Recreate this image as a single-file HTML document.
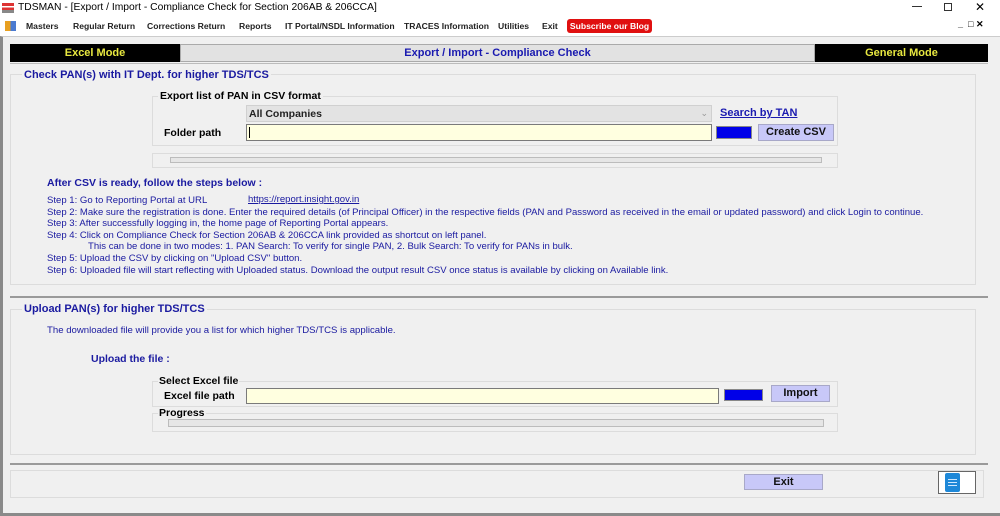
<!DOCTYPE html>
<html><head><meta charset="utf-8"><style>
*{margin:0;padding:0;box-sizing:border-box}
body{width:1000px;height:516px;background:#fff;font-family:"Liberation Sans",Arial,sans-serif;position:relative;overflow:hidden;color:#000}
.a{position:absolute;white-space:nowrap}
.b{font-weight:bold}
.blue{color:#1a1aa0}
.box{position:absolute;border:1px solid #dcdcdc}
.m{position:absolute;top:21px;font-size:8.6px;font-weight:bold;color:#222;white-space:nowrap}
.btn{position:absolute;background:#c8c8f8;border:1px solid #a8a8c8;font-weight:bold;font-size:11px;text-align:center;color:#111}
.bb{position:absolute;background:#0000e8;border:1px solid #888}
.inp{position:absolute;background:#ffffe0;border:1px solid #7a7a7a}
.bar{position:absolute;background:#e6e6e6;border:1px solid #bcbcbc}
.step{font-size:9.55px;color:#1a1aa0}
</style></head><body>
<!-- title bar -->
<div class="a" style="left:2px;top:3px;width:12px;height:10px;background:linear-gradient(#d33 0 30%,#fff 30% 45%,#d33 45% 70%,#888 70%)"></div>
<div class="a" style="left:18px;top:2px;font-size:10.3px">TDSMAN - [Export / Import - Compliance Check for Section 206AB &amp; 206CCA]</div>
<div class="a" style="left:912px;top:6px;width:10px;height:1px;background:#333"></div>
<div class="a" style="left:944px;top:3px;width:8px;height:8px;border:1px solid #333"></div>
<div class="a" style="left:975px;top:0px;font-size:12px">&#10005;</div>
<!-- menu -->
<div class="a" style="left:5px;top:21px;width:11px;height:10px;background:linear-gradient(90deg,#e8a020 50%,#4a7ad0 50%)"></div>
<div class="m" style="left:26px">Masters</div>
<div class="m" style="left:73px">Regular Return</div>
<div class="m" style="left:147px">Corrections Return</div>
<div class="m" style="left:239px">Reports</div>
<div class="m" style="left:285px">IT Portal/NSDL Information</div>
<div class="m" style="left:404px">TRACES Information</div>
<div class="m" style="left:498px">Utilities</div>
<div class="m" style="left:542px">Exit</div>
<div class="a" style="left:567px;top:19px;width:85px;height:14px;background:#e01010;border-radius:3px;color:#fff;font-size:8.6px;font-weight:bold;text-align:center;line-height:14px">Subscribe our Blog</div>
<div class="a b" style="left:958px;top:19px;font-size:9px">_ &nbsp;&#9633; &#10005;</div>
<!-- content -->
<div class="a" style="left:0;top:36px;width:1000px;height:480px;background:#f0f0f0;border-left:3px solid #8a8a8a;border-top:1px solid #ccc"></div>
<div class="a" style="left:0;top:513px;width:1000px;height:3px;background:#8a8a8a"></div>
<div class="a" style="left:10px;top:44px;width:170px;height:18px;background:#000;color:#e8e840;font-weight:bold;font-size:11px;text-align:center;line-height:18px">Excel Mode</div>
<div class="a" style="left:180px;top:44px;width:635px;height:18px;background:#e2e2e2;border:1px solid #aaa;color:#1a1ab0;font-weight:bold;font-size:11px;text-align:center;line-height:16px">Export / Import - Compliance Check</div>
<div class="a" style="left:815px;top:44px;width:173px;height:18px;background:#000;color:#e8e840;font-weight:bold;font-size:11px;text-align:center;line-height:18px">General Mode</div>
<div class="a" style="left:10px;top:63px;width:978px;height:1px;background:#bbb"></div>
<!-- section 1 -->
<div class="box" style="left:10px;top:74px;width:966px;height:211px"></div>
<div class="a b blue" style="left:22px;top:69px;font-size:11px;background:#f0f0f0;padding:0 2px">Check PAN(s) with IT Dept. for higher TDS/TCS</div>
<div class="box" style="left:152px;top:96px;width:686px;height:50px"></div>
<div class="a b" style="left:158px;top:90px;font-size:10.5px;background:#f0f0f0;padding:0 2px">Export list of PAN in CSV format</div>
<div class="a" style="left:246px;top:105px;width:466px;height:17px;background:#e3e3e3;border:1px solid #d0d0d0;font-size:10.5px;font-weight:bold;padding:2px 2px;color:#222">All Companies<span style="position:absolute;right:3px;top:2px;color:#999;font-weight:normal;font-size:9px">&#8964;</span></div>
<div class="a b" style="left:720px;top:107px;font-size:11px;color:#1a1ab0;text-decoration:underline">Search by TAN</div>
<div class="a b" style="left:164px;top:127px;font-size:10.5px">Folder path</div>
<div class="inp" style="left:246px;top:124px;width:466px;height:17px"><div style="position:absolute;left:2px;top:2px;width:1px;height:11px;background:#000"></div></div>
<div class="bb" style="left:716px;top:126px;width:36px;height:13px"></div>
<div class="btn" style="left:758px;top:124px;width:76px;height:17px;line-height:15px">Create CSV</div>
<div class="box" style="left:152px;top:153px;width:686px;height:15px"></div>
<div class="bar" style="left:170px;top:157px;width:652px;height:6px"></div>
<div class="a b blue" style="left:47px;top:177px;font-size:10.5px">After CSV is ready, follow the steps below :</div>
<div class="a step" style="left:47px;top:195px">Step 1: Go to Reporting Portal at URL</div>
<div class="a step" style="left:248px;top:194px;text-decoration:underline">https://report.insight.gov.in</div>
<div class="a step" style="left:47px;top:207px">Step 2: Make sure the registration is done. Enter the required details (of Principal Officer) in the respective fields (PAN and Password as received in the email or updated password) and click Login to continue.</div>
<div class="a step" style="left:47px;top:218px">Step 3: After successfully logging in, the home page of Reporting Portal appears.</div>
<div class="a step" style="left:47px;top:230px">Step 4: Click on Compliance Check for Section 206AB &amp; 206CCA link provided as shortcut on left panel.</div>
<div class="a step" style="left:88px;top:241px">This can be done in two modes: 1. PAN Search: To verify for single PAN, 2. Bulk Search: To verify for PANs in bulk.</div>
<div class="a step" style="left:47px;top:253px">Step 5: Upload the CSV by clicking on "Upload CSV" button.</div>
<div class="a step" style="left:47px;top:265px">Step 6: Uploaded file will start reflecting with Uploaded status. Download the output result CSV once status is available by clicking on Available link.</div>
<div class="a" style="left:10px;top:296px;width:978px;height:2px;background:#9a9a9a"></div>
<!-- section 2 -->
<div class="box" style="left:10px;top:309px;width:966px;height:146px"></div>
<div class="a b blue" style="left:22px;top:303px;font-size:11px;background:#f0f0f0;padding:0 2px">Upload PAN(s) for higher TDS/TCS</div>
<div class="a blue" style="left:47px;top:325px;font-size:9.6px">The downloaded file will provide you a list for which higher TDS/TCS is applicable.</div>
<div class="a b blue" style="left:91px;top:353px;font-size:10.5px">Upload the file :</div>
<div class="box" style="left:152px;top:381px;width:686px;height:26px"></div>
<div class="a b" style="left:158px;top:375px;font-size:10.5px;background:#f0f0f0;padding:0 1px">Select Excel file</div>
<div class="a b" style="left:164px;top:390px;font-size:10.5px">Excel file path</div>
<div class="inp" style="left:246px;top:388px;width:473px;height:16px"></div>
<div class="bb" style="left:724px;top:389px;width:39px;height:12px"></div>
<div class="btn" style="left:771px;top:385px;width:59px;height:17px;line-height:15px">Import</div>
<div class="box" style="left:152px;top:413px;width:686px;height:19px"></div>
<div class="a b" style="left:158px;top:407px;font-size:10.5px;background:#f0f0f0;padding:0 1px">Progress</div>
<div class="bar" style="left:168px;top:419px;width:656px;height:8px"></div>
<div class="a" style="left:10px;top:463px;width:978px;height:2px;background:#9a9a9a"></div>
<!-- bottom -->
<div class="box" style="left:10px;top:470px;width:974px;height:28px"></div>
<div class="btn" style="left:744px;top:474px;width:79px;height:16px;line-height:14px">Exit</div>
<div class="a" style="left:938px;top:471px;width:38px;height:23px;border:1px solid #666;background:#fff"></div>
<div class="a" style="left:945px;top:473px;width:15px;height:19px;background:#1e88d8;border-radius:2px"></div>
<div class="a" style="left:948px;top:479px;width:9px;height:1px;background:#cfe8ff;box-shadow:0 3px 0 #cfe8ff,0 6px 0 #cfe8ff"></div>
</body></html>
